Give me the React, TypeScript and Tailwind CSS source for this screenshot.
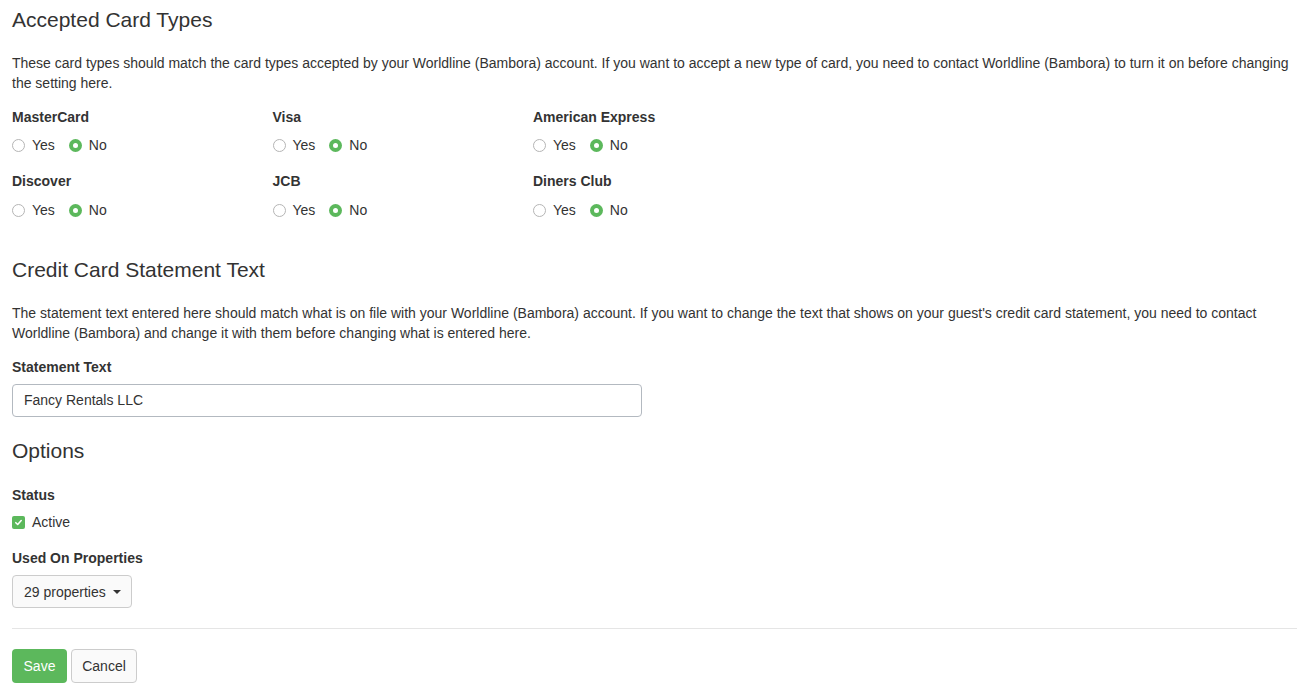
import React from "react";

const cards = [
  ["MasterCard", "Visa", "American Express"],
  ["Discover", "JCB", "Diners Club"],
];

function Radio({ checked }: { checked?: boolean }) {
  return checked ? (
    <span className="inline-flex h-[13px] w-[13px] items-center justify-center rounded-full bg-[#5cb85c]">
      <span className="h-[5px] w-[5px] rounded-full bg-white" />
    </span>
  ) : (
    <span className="inline-block h-[13px] w-[13px] rounded-full border border-[#b5b5b5] bg-white" />
  );
}

function CardField({ name, last }: { name: string; last?: boolean }) {
  return (
    <div className="w-[260.5px]">
      <div className="font-bold leading-5">{name}</div>
      <div className={last ? "mt-[9px] flex items-center leading-5" : "mt-2 flex items-center leading-5"}>
        <Radio />
        <span className="ml-[7px]">Yes</span>
        <span className="ml-[14px]" />
        <Radio checked />
        <span className="ml-[7px]">No</span>
      </div>
    </div>
  );
}

export default function App() {
  return (
    <div className="min-h-screen bg-white pl-3 text-[14px] text-[#333] [font-family:'Liberation_Sans',Arial,sans-serif]">
      <h3 className="pt-[9px] text-[21px] leading-[22px]">Accepted Card Types</h3>
      <p className="mt-[22px] leading-5">
        These card types should match the card types accepted by your Worldline (Bambora) account. If you want to accept a new type of card, you need to contact Worldline (Bambora) to turn it on before changing the setting here.
      </p>
      <div className="mt-[14px] flex flex-col gap-4">
        {cards.map((row, i) => (
          <div key={i} className="flex">
            {row.map((c) => (
              <CardField key={c} name={c} last={i === 1} />
            ))}
          </div>
        ))}
      </div>

      <h3 className="mt-[39px] text-[21px] leading-[22px]">Credit Card Statement Text</h3>
      <p className="mt-[22px] leading-5">
        The statement text entered here should match what is on file with your Worldline (Bambora) account. If you want to change the text that shows on your guest's credit card statement, you need to contact Worldline (Bambora) and change it with them before changing what is entered here.
      </p>
      <div className="mt-[14px] font-bold leading-5">Statement Text</div>
      <div className="mt-[7px] flex h-[33px] w-[630px] items-center rounded border border-[#b3b9c0] px-[11px]">
        Fancy Rentals LLC
      </div>

      <h3 className="mt-[23px] text-[21px] leading-[22px]">Options</h3>
      <div className="mt-[23px] font-bold leading-5">Status</div>
      <div className="mt-[7px] flex items-center leading-5">
        <span className="inline-flex h-[13px] w-[13px] items-center justify-center rounded-[2px] bg-[#5cb85c]">
          <svg viewBox="0 0 10 10" className="h-[9px] w-[9px]">
            <path d="M2 5.2 L4.1 7.2 L8 2.9" fill="none" stroke="white" strokeWidth="1.7" strokeLinecap="round" strokeLinejoin="round" />
          </svg>
        </span>
        <span className="ml-[7px]">Active</span>
      </div>
      <div className="mt-4 font-bold leading-5">Used On Properties</div>
      <button className="mt-[7px] flex h-[33px] w-[120px] items-center rounded border border-[#ccc] bg-[#fafafa] pl-[11px] leading-5">
        29 properties
        <span className="ml-[7px] h-0 w-0 border-x-[4px] border-t-[4px] border-x-transparent border-t-[#333]" />
      </button>

      <hr className="mt-5 border-t border-[#e5e5e5]" />

      <div className="mt-5 flex gap-1">
        <button className="flex h-[34px] w-[55px] items-center justify-center rounded bg-[#5cb85c] text-white">Save</button>
        <button className="flex h-[34px] w-[66px] items-center justify-center rounded border border-[#ccc] bg-[#fafafa]">Cancel</button>
      </div>
    </div>
  );
}
